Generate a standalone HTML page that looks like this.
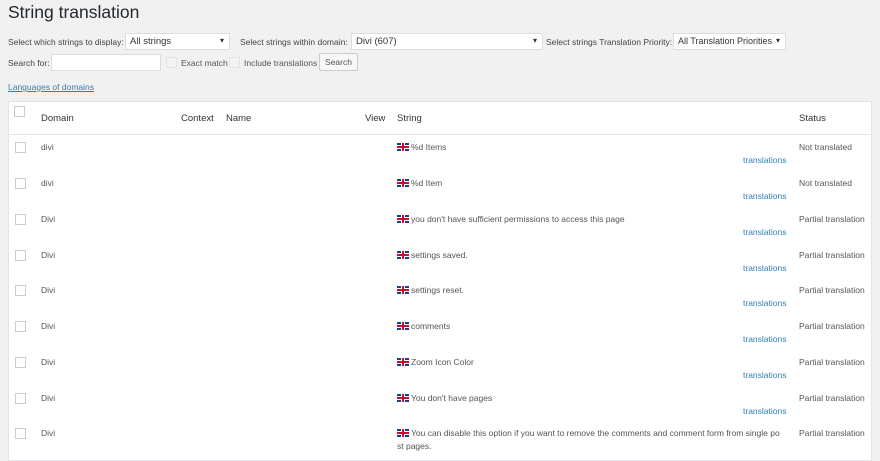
<!DOCTYPE html>
<html><head><meta charset="utf-8"><style>
*{margin:0;padding:0;box-sizing:border-box}
body{width:880px;height:454px;background:#f1f1f1;font-family:"Liberation Sans",sans-serif;color:#444;position:relative;overflow:hidden}
.a{position:absolute;white-space:nowrap}
.sel,.inp{position:absolute;background:#fff;border:1px solid #ddd;height:17px;font-size:9.5px;color:#333;padding:2px 4px;white-space:nowrap;overflow:hidden}
.sel::after{content:"▾";position:absolute;right:5px;top:2px;font-size:8px}
.lbl{font-size:8.5px;color:#444}
.cb{position:absolute;width:11px;height:11px;border:1px solid #ccc;background:#fff}
.tbl{position:absolute;left:8px;top:101px;width:864px;height:360px;background:#fff;border:1px solid #e2e4e7}
.t{font-size:8.5px;color:#555}
.h{font-size:9.5px;color:#333}
.tr{font-size:8.5px;color:#2e80b8}
.flag{display:inline-block;width:12px;height:8px;vertical-align:-1px;margin-right:2px;background:
linear-gradient(#c8102e,#c8102e) center/12px 2px no-repeat,
linear-gradient(#c8102e,#c8102e) center/2px 8px no-repeat,
linear-gradient(#fff,#fff) center/12px 4px no-repeat,
linear-gradient(#fff,#fff) center/4px 8px no-repeat,#1e3a8a}
</style></head><body>
<div class="a" style="left:8px;top:2px;font-size:17.5px;color:#23282d">String translation</div>
<div class="a lbl" style="left:8px;top:37px">Select which strings to display:</div>
<div class="sel" style="left:125px;top:33px;width:105px">All strings</div>
<div class="a lbl" style="left:240px;top:37px">Select strings within domain:</div>
<div class="sel" style="left:351px;top:33px;width:192px">Divi (607)</div>
<div class="a lbl" style="left:546px;top:37px">Select strings Translation Priority:</div>
<div class="sel" style="left:673px;top:33px;width:113px;padding-right:12px;font-size:9px">All Translation Priorities</div>
<div class="a lbl" style="left:8px;top:58px">Search for:</div>
<div class="inp" style="left:51px;top:54px;width:110px"></div>
<div class="cb" style="left:166px;top:57px;border-color:#e4e4e4;background:#f3f3f3"></div>
<div class="a lbl" style="left:181px;top:58px;color:#555">Exact match</div>
<div class="cb" style="left:229px;top:57px;border-color:#e4e4e4;background:#f3f3f3"></div>
<div class="a lbl" style="left:244px;top:58px;color:#555">Include translations</div>
<div class="a" style="left:319px;top:53px;width:39px;height:18px;border:1px solid #ccc;background:#f7f7f7;font-size:8.5px;color:#555;text-align:center;line-height:16px;border-radius:2px">Search</div>
<div class="a" style="left:8px;top:82px;font-size:8.5px;color:#2e80b8;text-decoration:underline">Languages of domains</div>
<div class="tbl"></div>
<div class="a" style="left:8px;top:134px;width:864px;height:1px;background:#e5e5e5"></div>
<div class="cb" style="left:14px;top:106px"></div>
<div class="a h" style="left:41px;top:113px">Domain</div>
<div class="a h" style="left:181px;top:113px">Context</div>
<div class="a h" style="left:226px;top:113px">Name</div>
<div class="a h" style="left:365px;top:113px">View</div>
<div class="a h" style="left:397px;top:113px">String</div>
<div class="a h" style="left:799px;top:113px">Status</div>
<div class="cb" style="left:15px;top:142px"></div><div class="a t" style="left:41px;top:142px">divi</div><div class="a t" style="left:397px;top:142px"><span class="flag"></span>%d Items</div><div class="a tr" style="left:743px;top:155px">translations</div><div class="a t" style="left:799px;top:142px">Not translated</div>
<div class="cb" style="left:15px;top:178px"></div><div class="a t" style="left:41px;top:178px">divi</div><div class="a t" style="left:397px;top:178px"><span class="flag"></span>%d Item</div><div class="a tr" style="left:743px;top:191px">translations</div><div class="a t" style="left:799px;top:178px">Not translated</div>
<div class="cb" style="left:15px;top:214px"></div><div class="a t" style="left:41px;top:214px">Divi</div><div class="a t" style="left:397px;top:214px"><span class="flag"></span>you don't have sufficient permissions to access this page</div><div class="a tr" style="left:743px;top:227px">translations</div><div class="a t" style="left:799px;top:214px">Partial translation</div>
<div class="cb" style="left:15px;top:250px"></div><div class="a t" style="left:41px;top:250px">Divi</div><div class="a t" style="left:397px;top:250px"><span class="flag"></span>settings saved.</div><div class="a tr" style="left:743px;top:263px">translations</div><div class="a t" style="left:799px;top:250px">Partial translation</div>
<div class="cb" style="left:15px;top:285px"></div><div class="a t" style="left:41px;top:285px">Divi</div><div class="a t" style="left:397px;top:285px"><span class="flag"></span>settings reset.</div><div class="a tr" style="left:743px;top:298px">translations</div><div class="a t" style="left:799px;top:285px">Partial translation</div>
<div class="cb" style="left:15px;top:321px"></div><div class="a t" style="left:41px;top:321px">Divi</div><div class="a t" style="left:397px;top:321px"><span class="flag"></span>comments</div><div class="a tr" style="left:743px;top:334px">translations</div><div class="a t" style="left:799px;top:321px">Partial translation</div>
<div class="cb" style="left:15px;top:357px"></div><div class="a t" style="left:41px;top:357px">Divi</div><div class="a t" style="left:397px;top:357px"><span class="flag"></span>Zoom Icon Color</div><div class="a tr" style="left:743px;top:370px">translations</div><div class="a t" style="left:799px;top:357px">Partial translation</div>
<div class="cb" style="left:15px;top:393px"></div><div class="a t" style="left:41px;top:393px">Divi</div><div class="a t" style="left:397px;top:393px"><span class="flag"></span>You don't have pages</div><div class="a tr" style="left:743px;top:406px">translations</div><div class="a t" style="left:799px;top:393px">Partial translation</div>
<div class="cb" style="left:15px;top:428px"></div><div class="a t" style="left:41px;top:428px">Divi</div><div class="a t" style="left:397px;top:428px"><span class="flag"></span>You can disable this option if you want to remove the comments and comment form from single po</div><div class="a t" style="left:397px;top:441px">st pages.</div><div class="a t" style="left:799px;top:428px">Partial translation</div>
</body></html>
